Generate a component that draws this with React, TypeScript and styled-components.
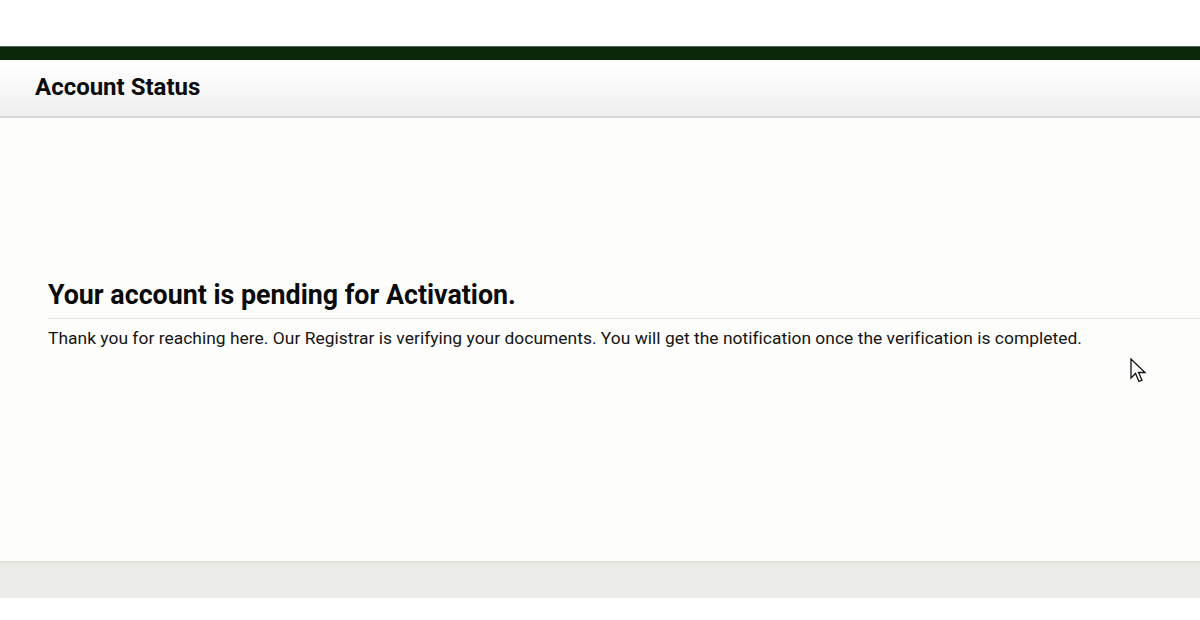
import styled, { createGlobalStyle } from "styled-components"

const GlobalStyle = createGlobalStyle`
  html, body {
    margin: 0;
    padding: 0;
    background: #ffffff;
  }
  body {
    font-family: Roboto, "Liberation Sans", Arial, sans-serif;
    color: #111;
  }
`

const Page = styled.div`
  position: relative;
  width: 1200px;
  height: 620px;
  padding-top: 46px;
  box-sizing: border-box;
  overflow: hidden;
`

const TopBar = styled.div`
  height: 13px;
  background: #0b2809;
  border-top: 1px solid #4f6a4b;
`

const Header = styled.div`
  height: 56px;
  display: flex;
  align-items: center;
  padding-left: 35px;
  background: linear-gradient(to bottom, #ffffff 0%, #fbfbfb 30%, #f1f1f1 85%, #eeeeee 100%);
  border-bottom: 2px solid #d6d6d4;
`

const Title = styled.h1`
  margin: 0 0 2px 0;
  font-size: 24px;
  font-weight: 700;
  color: #0c0c0c;
`

const Content = styled.main`
  height: 443px;
  background: #fdfdfb;
  padding: 161px 0 0 48px;
  box-sizing: border-box;
`

const Heading = styled.h2`
  margin: 0;
  padding: 0 0 7px 0;
  font-size: 26.8px;
  line-height: 32px;
  font-weight: 700;
  color: #0a0a0a;
  border-bottom: 1px solid #e2e2e2;
`

const Message = styled.p`
  margin: 9px 0 0 0;
  font-size: 17.4px;
  line-height: 20px;
  letter-spacing: 0.03px;
  color: #141414;
`

const Footer = styled.div`
  height: 37px;
  background: #ebebe7;
  box-shadow: inset 0 3px 3px -2px #dcdcd6;
`

const Cursor = styled.svg`
  position: absolute;
  left: 1130px;
  top: 358px;
`

export default function App() {
  return (
    <>
      <GlobalStyle />
      <Page>
        <TopBar />
        <Header>
          <Title>Account Status</Title>
        </Header>
        <Content>
          <Heading>Your account is pending for Activation.</Heading>
          <Message>
            Thank you for reaching here. Our Registrar is verifying your documents. You will get the notification once the verification is completed.
          </Message>
        </Content>
        <Footer />
        <Cursor width="18" height="27" viewBox="0 0 18 27">
          <path
            d="M1 1 L1 20 L5.5 15.5 L9 23.5 L12 22.2 L8.6 14.5 L15 14.5 Z"
            fill="#fff"
            stroke="#111"
            strokeWidth="1.3"
            strokeLinejoin="miter"
          />
        </Cursor>
      </Page>
    </>
  )
}
